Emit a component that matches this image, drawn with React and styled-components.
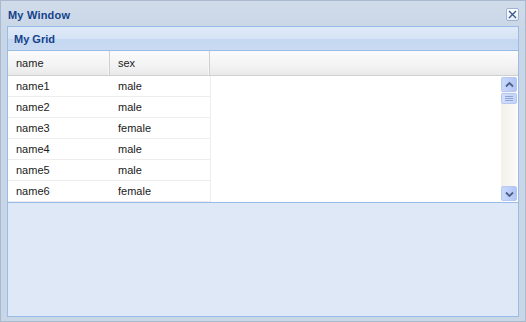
import React from "react";
import styled, { createGlobalStyle } from "styled-components";

const rows = [
  { name: "name1", sex: "male" },
  { name: "name2", sex: "male" },
  { name: "name3", sex: "female" },
  { name: "name4", sex: "male" },
  { name: "name5", sex: "male" },
  { name: "name6", sex: "female" },
];

const GlobalStyle = createGlobalStyle`
  html, body {
    margin: 0;
    padding: 0;
    background: #ffffff;
  }
  body {
    font-family: "Liberation Sans", Arial, sans-serif;
  }
`;

const Window = styled.div`
  width: 526px;
  height: 322px;
  box-sizing: border-box;
  border: 1px solid #a9bad0;
  background: linear-gradient(#d0dcea, #c9d6e6 30px, #c9d6e6);
  padding: 0 6px 4px 6px;
  display: flex;
  flex-direction: column;
`;

const WindowHeader = styled.div`
  height: 25px;
  display: flex;
  align-items: center;
  justify-content: space-between;
  padding: 0 0 0 1px;
`;

const Title = styled.span`
  font: bold 11px "Liberation Sans", Arial, sans-serif;
  letter-spacing: 0.2px;
  color: #15428b;
  margin-top: 2px;
`;

const CloseButton = styled.div`
  width: 13px;
  height: 13px;
  box-sizing: border-box;
  border: 1px solid #9db4d8;
  border-radius: 2px;
  background: linear-gradient(#ffffff, #e8eef8);
  display: flex;
  align-items: center;
  justify-content: center;
  margin-top: 2px;
`;

const WindowBody = styled.div`
  flex: 1;
  border: 1px solid #99bbe8;
  background: #dfe8f6;
  display: flex;
  flex-direction: column;
`;

const PanelHeader = styled.div`
  height: 23px;
  border-bottom: 1px solid #99bbe8;
  background: linear-gradient(#dfeaf8, #d5e3f5 50%, #c4d8f1 51%, #c9dbf2);
  display: flex;
  align-items: center;
  padding-left: 6px;
  font: bold 11px "Liberation Sans", Arial, sans-serif;
  color: #15428b;
`;

const Grid = styled.div`
  background: #ffffff;
  border-bottom: 1px solid #99bbe8;
  display: flex;
  flex-direction: column;
`;

const HeaderRow = styled.div`
  height: 24px;
  border-bottom: 1px solid #d0d0d0;
  background: linear-gradient(#fbfbfb, #f3f3f3 60%, #e9e9e9);
  display: flex;
`;

const HeaderCell = styled.div`
  width: ${(p) => p.$w}px;
  box-sizing: border-box;
  border-right: 1px solid #d0d0d0;
  box-shadow: inset -1px 0 0 #f6f6f6;
  padding-left: 8px;
  display: flex;
  align-items: center;
  font: 11px "Liberation Sans", Arial, sans-serif;
  color: #222;
`;

const GridBody = styled.div`
  height: 126px;
  display: flex;
  justify-content: space-between;
`;

const Rows = styled.div`
  width: 202px;
  border-right: 1px solid #ededed;
  display: flex;
  flex-direction: column;
`;

const Row = styled.div`
  height: 20px;
  border-bottom: 1px solid #ededed;
  display: flex;
  align-items: center;
`;

const Cell = styled.div`
  width: ${(p) => p.$w}px;
  padding-left: 8px;
  box-sizing: border-box;
  font: 11px "Liberation Sans", Arial, sans-serif;
  color: #1a1a1a;
`;

const Scrollbar = styled.div`
  width: 16px;
  margin: 1px 1px 1px 0;
  background: linear-gradient(90deg, #f3f1ea, #fbfaf7);
  display: flex;
  flex-direction: column;
  justify-content: space-between;
`;

const ScrollTop = styled.div`
  display: flex;
  flex-direction: column;
`;

const ScrollButton = styled.div`
  height: 15px;
  box-sizing: border-box;
  border: 1px solid #b6c8f0;
  border-radius: 2px;
  background: linear-gradient(90deg, #c9d8fb, #bccef9 60%, #b2c5f5);
  display: flex;
  align-items: center;
  justify-content: center;
`;

const Thumb = styled(ScrollButton)`
  height: 11px;
  margin-top: 1px;
  background: linear-gradient(90deg, #d3dffb, #c3d4fa);
  flex-direction: column;
  gap: 1px;
`;

const Grip = styled.span`
  width: 8px;
  height: 1px;
  background: #8ea4d4;
`;

const Chevron = ({ down }) => (
  <svg width="9" height="6" viewBox="0 0 9 6">
    <path
      d={down ? "M1 1.5 L4.5 5 L8 1.5" : "M1 4.5 L4.5 1 L8 4.5"}
      fill="none"
      stroke="#4d6185"
      strokeWidth="1.8"
    />
  </svg>
);

export default function App() {
  return (
    <>
      <GlobalStyle />
      <Window>
        <WindowHeader>
          <Title>My Window</Title>
          <CloseButton>
            <svg width="9" height="9" viewBox="0 0 9 9">
              <path d="M1 1 L8 8 M8 1 L1 8" stroke="#3a5a94" strokeWidth="1.4" />
            </svg>
          </CloseButton>
        </WindowHeader>
        <WindowBody>
          <PanelHeader>My Grid</PanelHeader>
          <Grid>
            <HeaderRow>
              <HeaderCell $w={102}>name</HeaderCell>
              <HeaderCell $w={100}>sex</HeaderCell>
            </HeaderRow>
            <GridBody>
              <Rows>
                {rows.map((r) => (
                  <Row key={r.name}>
                    <Cell $w={102}>{r.name}</Cell>
                    <Cell $w={100}>{r.sex}</Cell>
                  </Row>
                ))}
              </Rows>
              <Scrollbar>
                <ScrollTop>
                  <ScrollButton>
                    <Chevron />
                  </ScrollButton>
                  <Thumb>
                    <Grip />
                    <Grip />
                    <Grip />
                  </Thumb>
                </ScrollTop>
                <ScrollButton>
                  <Chevron down />
                </ScrollButton>
              </Scrollbar>
            </GridBody>
          </Grid>
        </WindowBody>
      </Window>
    </>
  );
}
